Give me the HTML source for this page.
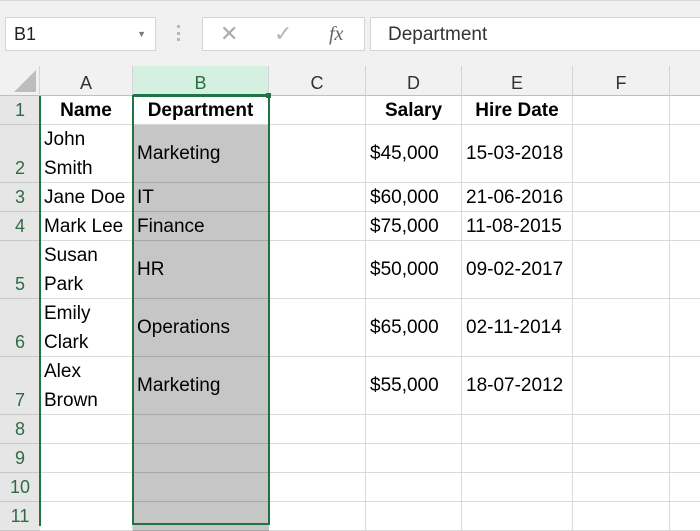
<!DOCTYPE html>
<html><head><style>
*{margin:0;padding:0;box-sizing:border-box}
body{width:700px;height:519px;overflow:hidden;background:#fff;font-family:"Liberation Sans",sans-serif;position:relative}
.top{position:absolute;left:0;top:0;width:700px;height:66px;background:#f1f1f1;border-top:1px solid #d9d9d9}
.box{position:absolute;background:#fff;border:1px solid #d4d4d4}
.ch{position:absolute;top:66px;height:30px;background:#f1f1f1;border-right:1px solid #d4d4d4;border-bottom:1px solid #bfbfbf;font-size:18px;color:#333;text-align:center;line-height:34px}
.rh{position:absolute;left:0;width:40px;background:#e6e6e6;border-bottom:1px solid #c8c8c8;color:#2f6b47;font-size:18px;text-align:center}
.c{position:absolute;font-size:19px;color:#000;border-bottom:1px solid #d9d9d9;border-right:1px solid #d9d9d9;padding:0 4px;display:flex;align-items:center;line-height:29px;white-space:nowrap}
.b{font-weight:bold;justify-content:center}
.g{background:#c6c6c6;border-bottom-color:#a8a8a8;border-right:none}
</style></head><body>
<div class="top"></div>
<div class="box" style="left:5px;top:17px;width:151px;height:34px;font-size:18px;line-height:32px;padding-left:8px;color:#222">B1<span style="position:absolute;right:9px;top:0;font-size:9px;color:#777">▼</span></div>
<div style="position:absolute;left:177px;top:25px;width:3px;height:16px;border-left:3px dotted #b8b8b8"></div>
<div class="box" style="left:202px;top:17px;width:163px;height:34px;color:#aaa;font-size:22px;line-height:32px">
<span style="position:absolute;left:17px">✕</span><span style="position:absolute;left:71px;color:#b5b5b5">✓</span><span style="position:absolute;left:126px;font-family:'Liberation Serif',serif;font-style:italic;color:#666;font-size:20px">fx</span></div>
<div class="box" style="left:370px;top:17px;width:340px;height:34px;font-size:19px;line-height:34px;padding-left:17px;color:#333">Department</div>
<div class="ch" style="left:0;width:40px;background:#f1f1f1"><div style="position:absolute;right:3px;bottom:3px;width:0;height:0;border-left:22px solid transparent;border-bottom:22px solid #bdbdbd"></div></div>
<div class="ch" style="left:40px;width:93px">A</div>
<div class="ch" style="left:133px;width:136px;background:#d3f0e0;border-bottom:2px solid #217346;color:#2f6b47">B</div>
<div class="ch" style="left:269px;width:97px">C</div>
<div class="ch" style="left:366px;width:96px">D</div>
<div class="ch" style="left:462px;width:111px">E</div>
<div class="ch" style="left:573px;width:97px">F</div>
<div class="ch" style="left:670px;width:40px"></div>
<div id="g"></div>
<script>
var rows=[[96,29],[125,58],[183,29],[212,29],[241,58],[299,58],[357,58],[415,29],[444,29],[473,29],[502,29]];
var cols=[[40,93],[133,136],[269,97],[366,96],[462,111],[573,97],[670,40]];
var data=[["Name","Department","","Salary","Hire Date","",""],
["John<br>Smith","Marketing","","$45,000","15-03-2018","",""],
["Jane Doe","IT","","$60,000","21-06-2016","",""],
["Mark Lee","Finance","","$75,000","11-08-2015","",""],
["Susan<br>Park","HR","","$50,000","09-02-2017","",""],
["Emily<br>Clark","Operations","","$65,000","02-11-2014","",""],
["Alex<br>Brown","Marketing","","$55,000","18-07-2012","",""]];
var h="";
rows.forEach(function(r,i){
h+='<div class="rh" style="top:'+r[0]+'px;height:'+r[1]+'px;line-height:'+(r[1]*2-29)+'px">'+(i+1)+'</div>';
cols.forEach(function(c,j){
var t=(data[i]||[])[j]||"";var cls="c";
if(i==0)cls+=" b";
if(j==1&&i>0)cls+=" g";
h+='<div class="'+cls+'" style="left:'+c[0]+'px;top:'+r[0]+'px;width:'+c[1]+'px;height:'+r[1]+'px">'+t+'</div>';
});});
document.getElementById("g").innerHTML=h;
</script>
<div style="position:absolute;left:39px;top:96px;width:2px;height:430px;background:#217346"></div>
<div style="position:absolute;left:132px;top:95px;width:138px;height:430px;border:2px solid #217346"></div>
<div style="position:absolute;left:266px;top:93px;width:5px;height:5px;background:#217346"></div>
</body></html>
